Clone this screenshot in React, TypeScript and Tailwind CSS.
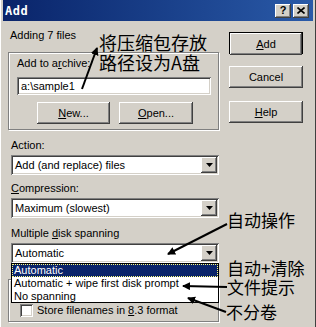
import React from "react";

const raised =
  "shadow-[inset_-1px_-1px_#404040,inset_1px_1px_#ffffff,inset_-2px_-2px_#808080,inset_2px_2px_#d4d0c8]";
const sunken =
  "shadow-[inset_1px_1px_#808080,inset_-1px_-1px_#ffffff,inset_2px_2px_#404040,inset_-2px_-2px_#d4d0c8]";

function Btn({ children, w, className = "" }: { children: React.ReactNode; w: string; className?: string }) {
  return (
    <div className={`h-[22px] ${w} bg-[#d4d0c8] ${raised} flex items-center justify-center ${className}`}>
      {children}
    </div>
  );
}

function Combo({ value }: { value: string }) {
  return (
    <div className={`ml-[3px] w-[208px] h-[20px] bg-white ${sunken} flex items-center pl-[4px] pr-[2px]`}>
      <span className="flex-1 leading-[13px]">{value}</span>
      <div className={`w-[16px] h-[16px] bg-[#d4d0c8] ${raised} flex items-center justify-center`}>
        <svg width="7" height="4" viewBox="0 0 7 4">
          <polygon points="0,0 7,0 3.5,4" fill="#000" />
        </svg>
      </div>
    </div>
  );
}

export default function App() {
  return (
    <div
      className="relative w-[316px] h-[327px] overflow-hidden bg-[#d4d0c8] text-[11px] text-black"
      style={{ fontFamily: '"Liberation Sans", Arial, sans-serif' }}
    >
      <div className="flex flex-col h-full px-[3px] shadow-[inset_1px_0_#ffffff,inset_-1px_0_#404040]">
        {/* title bar */}
        <div className="h-[21px] flex items-center bg-gradient-to-r from-[#0a246a] to-[#2a5aa8] pl-[2px] pr-[4px]">
          <span className="flex-1 text-white font-bold text-[12px] tracking-[0.5px]" style={{ fontFamily: '"DejaVu Sans Mono", monospace' }}>
            Add
          </span>
          <div className={`w-[16px] h-[14px] bg-[#d4d0c8] ${raised} flex items-center justify-center font-bold text-[11px] leading-none`}>?</div>
          <div className={`ml-[2px] w-[16px] h-[14px] bg-[#d4d0c8] ${raised} flex items-center justify-center`}>
            <svg width="8" height="7" viewBox="0 0 8 7">
              <path d="M0.5 0.5 L7.5 6.5 M7.5 0.5 L0.5 6.5" stroke="#000" strokeWidth="1.6" />
            </svg>
          </div>
        </div>

        {/* body */}
        <div className="flex">
          {/* left column */}
          <div className="ml-[5px] w-[211px] flex flex-col">
            <div className="pt-[8px] pl-[2px] leading-[13px]">Adding 7 files</div>
            <div className="mt-[10px] h-[78px] border border-[#808080] shadow-[1px_1px_#ffffff,inset_1px_1px_#ffffff] flex flex-col pl-[8px] pt-[4px]">
              <div className="leading-[13px]">
                Add to a<span className="underline">r</span>chive:
              </div>
              <div className={`mt-[7px] w-[194px] h-[18px] bg-white ${sunken} flex items-center pl-[4px] leading-[13px]`}>
                a:\sample1
              </div>
              <div className="mt-[7px] flex gap-[9px] ml-[20px]">
                <Btn w="w-[73px]">
                  <span className="underline">N</span>ew...
                </Btn>
                <Btn w="w-[74px]">
                  <span className="underline">O</span>pen...
                </Btn>
              </div>
            </div>
            <div className="mt-[9px] pl-[3px] leading-[13px]">Action:</div>
            <div className="mt-[3px]">
              <Combo value="Add (and replace) files" />
            </div>
            <div className="mt-[7px] pl-[3px] leading-[13px]">
              <span className="underline">C</span>ompression:
            </div>
            <div className="mt-[3px]">
              <Combo value="Maximum (slowest)" />
            </div>
            <div className="mt-[9px] pl-[3px] leading-[13px]">
              Multiple <span className="underline">d</span>isk spanning
            </div>
            <div className="mt-[3px]">
              <Combo value="Automatic" />
            </div>
            {/* options group (mostly hidden) */}
            <div className="mt-[16px] h-[43px] border border-[#808080] shadow-[1px_1px_#ffffff,inset_1px_1px_#ffffff] flex items-end pb-[4px] pl-[11px]">
              <div className="flex items-center gap-[4px]">
                <div className={`w-[13px] h-[13px] bg-white ${sunken}`} />
                <span className="leading-[13px]">
                  Store filenames in <span className="underline">8</span>.3 format
                </span>
              </div>
            </div>
          </div>

          {/* right column */}
          <div className="ml-[10px] w-[74px] flex flex-col">
            <div className="mt-[11px] h-[22px] border border-black">
              <Btn w="w-full" className="h-[20px]">
                <span className="underline">A</span>dd
              </Btn>
            </div>
            <div className="mt-[12px]">
              <Btn w="w-full">Cancel</Btn>
            </div>
            <div className="mt-[13px]">
              <Btn w="w-full">
                <span className="underline">H</span>elp
              </Btn>
            </div>
          </div>
        </div>
      </div>

      {/* open drop-down list */}
      <div className="absolute left-[11px] top-[263px] w-[208px] h-[40px] bg-white border border-black flex flex-col">
        <div className="h-[13px] bg-[#0a246a] text-white leading-[13px] pl-[2px] outline-1 outline-dotted outline-[#ffff80] -outline-offset-1">
          Automatic
        </div>
        <div className="h-[13px] leading-[13px] pl-[2px]">Automatic + wipe first disk prompt</div>
        <div className="h-[13px] leading-[13px] pl-[2px]">No spanning</div>
      </div>

      {/* annotations */}
      <div
        className="absolute left-[99px] top-[32px] text-[18px] leading-[20px] text-black"
        style={{ fontFamily: '"Noto Sans CJK SC", sans-serif' }}
      >
        <div>将压缩包存放</div>
        <div>路径设为A盘</div>
      </div>
      <div
        className="absolute left-[227px] top-[209px] text-[17px] leading-[22px]"
        style={{ fontFamily: '"Noto Sans CJK SC", sans-serif' }}
      >
        自动操作
      </div>
      <div
        className="absolute left-[227px] top-[258px] text-[17px] leading-[19px]"
        style={{ fontFamily: '"Noto Sans CJK SC", sans-serif' }}
      >
        <div>自动+清除</div>
        <div>文件提示</div>
      </div>
      <div
        className="absolute left-[226px] top-[301px] text-[17px] leading-[22px]"
        style={{ fontFamily: '"Noto Sans CJK SC", sans-serif' }}
      >
        不分卷
      </div>

      <svg className="absolute left-0 top-0 pointer-events-none" width="316" height="327" viewBox="0 0 316 327">
        <defs>
          <marker id="ah" markerWidth="8" markerHeight="8" refX="7" refY="4" orient="auto" markerUnits="userSpaceOnUse">
            <path d="M0,0 L8,4 L0,8 Z" fill="#000" />
          </marker>
        </defs>
        <g stroke="#000" strokeWidth="2" fill="none">
          <line x1="82" y1="89" x2="97" y2="48" markerEnd="url(#ah)" />
          <line x1="227" y1="224" x2="168" y2="254" markerEnd="url(#ah)" />
          <line x1="227" y1="287" x2="183" y2="286" markerEnd="url(#ah)" />
          <line x1="226" y1="312" x2="188" y2="298" markerEnd="url(#ah)" />
        </g>
      </svg>
    </div>
  );
}
